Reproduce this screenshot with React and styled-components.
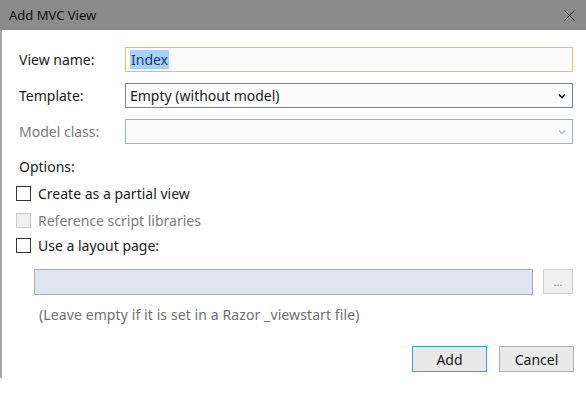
import React from 'react'
import styled, { createGlobalStyle } from 'styled-components'

const GlobalStyle = createGlobalStyle`
  body {
    margin: 0;
    background: #ffffff;
    font-family: "Noto Sans", "Open Sans", sans-serif;
  }
`

const Window = styled.div`
  width: 586px;
  height: 378px;
  display: flex;
  flex-direction: column;
  background: #ffffff;
`

const TitleBar = styled.div`
  height: 30px;
  flex: none;
  display: flex;
  align-items: center;
  justify-content: space-between;
  background: #8b8b8b;
  padding: 0 9px 0 9px;
  color: #111111;
  font-size: 13px;
`

const CloseButton = styled.div`
  width: 12px;
  height: 12px;
  margin-right: 2px;
  display: flex;
  align-items: center;
  justify-content: center;
`

const Body = styled.div`
  flex: 1;
  border-left: 2px solid #a6a6a6;
  padding: 17px 13px 0 17px;
  display: flex;
  flex-direction: column;
  font-size: 14px;
  color: #1a1a1a;
`

const FieldRow = styled.div`
  display: grid;
  grid-template-columns: 106px 1fr;
  align-items: center;
  height: 25px;
  margin-bottom: 11px;
`

const Label = styled.div`
  color: ${({ disabled }) => (disabled ? '#7b7b7b' : '#1a1a1a')};
  white-space: nowrap;
`

const TextBox = styled.div`
  height: 25px;
  box-sizing: border-box;
  border: 1px solid ${({ focused }) => (focused ? '#e3bf62' : '#a6acb4')};
  background: ${({ disabled }) => (disabled ? '#dfe5f0' : '#fbfbfb')};
  display: flex;
  align-items: center;
  padding-left: 4px;
`

const Selected = styled.span`
  background: #a9d1ff;
  color: #203a66;
  padding: 0 1px;
  line-height: 19px;
`

const Select = styled.div`
  height: 25px;
  box-sizing: border-box;
  border: 1px solid ${({ disabled }) => (disabled ? '#a6aeb9' : '#7a8494')};
  background: #fbfbfb;
  display: flex;
  align-items: center;
  justify-content: space-between;
  padding: 0 6px 0 4px;
`

const SectionLabel = styled.div`
  margin-top: 2px;
  height: 20px;
  line-height: 20px;
`

const CheckRow = styled.div`
  display: flex;
  align-items: center;
  gap: 7px;
  height: 15px;
  margin-left: -3px;
  margin-top: ${({ top }) => top}px;
  color: ${({ disabled }) => (disabled ? '#7b7b7b' : '#1a1a1a')};
`

const Box = styled.div`
  width: 15px;
  height: 15px;
  box-sizing: border-box;
  border: 1px solid ${({ disabled }) => (disabled ? '#cccccc' : '#333333')};
  background: ${({ disabled }) => (disabled ? '#f0f0f0' : '#ffffff')};
`

const PathRow = styled.div`
  display: flex;
  gap: 10px;
  margin-top: 16px;
  margin-left: 15px;
  height: 25px;
`

const PathBox = styled(TextBox)`
  flex: 1;
  height: 26px;
`

const BrowseButton = styled.div`
  width: 30px;
  height: 25px;
  box-sizing: border-box;
  border: 1px solid #cfcfcf;
  background: #f0f0f0;
  color: #8a8a8a;
  font-size: 11px;
  display: flex;
  align-items: center;
  justify-content: center;
`

const Hint = styled.div`
  margin-top: 11px;
  margin-left: 20px;
  color: #6e6e6e;
  line-height: 20px;
  letter-spacing: 0.1px;
`

const ButtonBar = styled.div`
  display: flex;
  justify-content: flex-end;
  gap: 12px;
  margin-top: 21px;
  margin-right: -1px;
`

const Button = styled.div`
  width: 75px;
  height: 26px;
  box-sizing: border-box;
  border: 1px solid ${({ primary }) => (primary ? '#3a9af0' : '#adadad')};
  background: #e9e9e9;
  display: flex;
  align-items: center;
  justify-content: center;
  color: #1a1a1a;
`

const Chevron = ({ color }) => (
  <svg width="8" height="6" viewBox="0 0 8 6">
    <path d="M1 1.5 L4 4.5 L7 1.5" fill="none" stroke={color} strokeWidth="1.6" />
  </svg>
)

const App = () => (
  <>
    <GlobalStyle />
    <Window>
      <TitleBar>
        <span>Add MVC View</span>
        <CloseButton>
          <svg width="11" height="11" viewBox="0 0 11 11">
            <path d="M0.5 0.5 L10.5 10.5 M10.5 0.5 L0.5 10.5" stroke="#111" strokeWidth="1" />
          </svg>
        </CloseButton>
      </TitleBar>
      <Body>
        <FieldRow>
          <Label>View name:</Label>
          <TextBox focused>
            <Selected>Index</Selected>
          </TextBox>
        </FieldRow>
        <FieldRow>
          <Label>Template:</Label>
          <Select>
            <span>Empty (without model)</span>
            <Chevron color="#111111" />
          </Select>
        </FieldRow>
        <FieldRow>
          <Label disabled>Model class:</Label>
          <Select disabled>
            <span />
            <Chevron color="#b8bec7" />
          </Select>
        </FieldRow>
        <SectionLabel>Options:</SectionLabel>
        <CheckRow top={9}>
          <Box />
          <span>Create as a partial view</span>
        </CheckRow>
        <CheckRow top={12} disabled>
          <Box disabled />
          <span>Reference script libraries</span>
        </CheckRow>
        <CheckRow top={10}>
          <Box />
          <span>Use a layout page:</span>
        </CheckRow>
        <PathRow>
          <PathBox disabled />
          <BrowseButton>...</BrowseButton>
        </PathRow>
        <Hint>(Leave empty if it is set in a Razor _viewstart file)</Hint>
        <ButtonBar>
          <Button primary>Add</Button>
          <Button>Cancel</Button>
        </ButtonBar>
      </Body>
    </Window>
  </>
)

export default App
